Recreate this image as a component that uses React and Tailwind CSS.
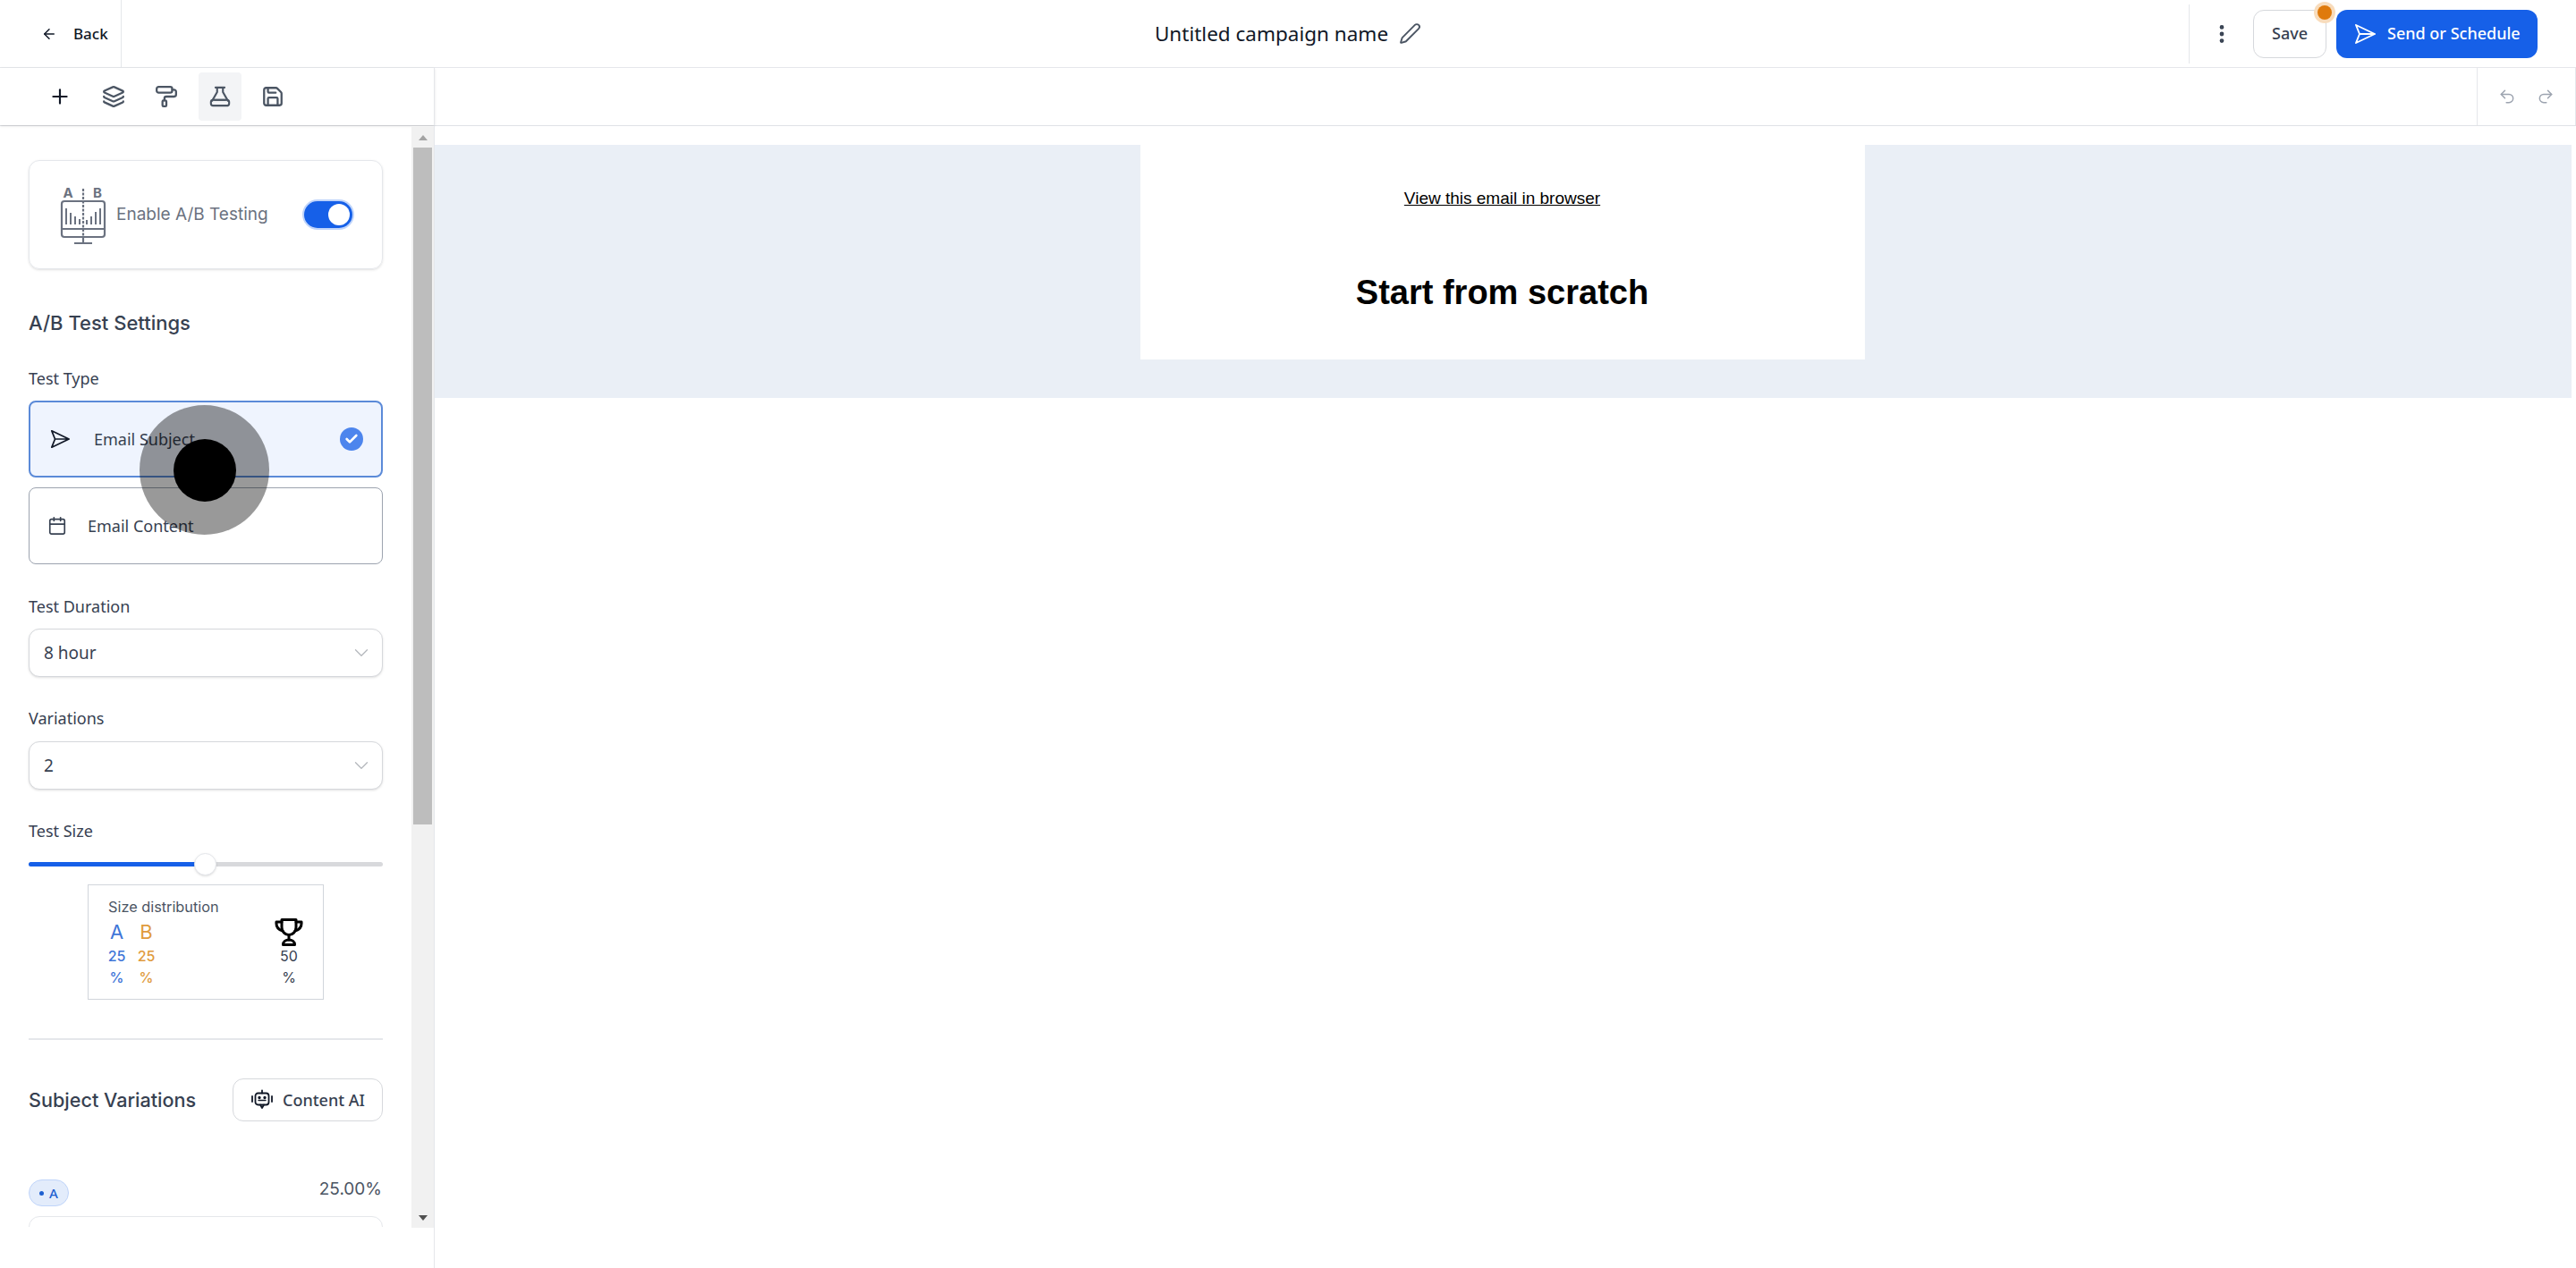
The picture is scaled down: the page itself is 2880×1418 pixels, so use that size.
import { ArrowLeft, Plus, Layers, PaintRoller, Save, Pen, EllipsisVertical, Undo2, Redo2, Calendar, ChevronDown, Check } from "lucide-react";

const PlaneIcon = ({ size = 24, color = "currentColor", stroke = 1.9 }) => (
  <svg width={size} height={size} viewBox="0 0 24 24" fill="none" stroke={color} strokeWidth={stroke} strokeLinejoin="round" strokeLinecap="round" className="shrink-0">
    <path d="M2 2 L23 12 L2 22 L6 12 Z M6 12 H23" />
  </svg>
);

const FlaskIcon = () => (
  <svg width="24" height="24" viewBox="0 0 26 26" fill="none" stroke="#4b5563" strokeWidth="2.3" strokeLinejoin="round" strokeLinecap="round">
    <path d="M7.5 2h11M9.5 2v5.5L3.5 18M16.5 2v5.5L22.5 18" />
    <rect x="2" y="17" width="22" height="7" rx="2.5" />
    <path d="M6.5 17h13" />
  </svg>
);

const TrophyIcon = () => (
  <svg width="32" height="32" viewBox="0 0 32 32" fill="none" stroke="#000000" strokeWidth="3" strokeLinejoin="round" strokeLinecap="round" className="-mt-[1px] mb-[1px] shrink-0">
    <path d="M8 2.5H24V11C24 16 20 19.5 16 19.5C12 19.5 8 16 8 11Z" />
    <path d="M8 5H2C1.5 10 4 13.5 9 15M24 5H30C30.5 10 28 13.5 23 15" />
    <path d="M16 19.5V25" />
    <path d="M9.5 30.5C9.5 27 12.5 25 16 25C19.5 25 22.5 27 22.5 30.5Z" />
  </svg>
);

const RobotIcon = () => (
  <svg width="24" height="24" viewBox="0 0 24 24" fill="none" stroke="#111827" strokeWidth="1.8" strokeLinecap="round" strokeLinejoin="round" className="shrink-0">
    <path d="M12 1.5V4.5" />
    <rect x="4.5" y="4.5" width="15" height="13" rx="3" />
    <path d="M1 8V14M23 8V14M10 17.5L12 21L14 17.5" />
    <path d="M8 12.5H16" strokeWidth="1.4" />
    <circle cx="9" cy="9.5" r="0.8" fill="#111827" />
    <circle cx="15" cy="9.5" r="0.8" fill="#111827" />
  </svg>
);

const AbIcon = () => (
  <svg width="52" height="70" viewBox="0 -4 52 70" fill="none" stroke="#6b7280" strokeWidth="2.2" className="shrink-0">
    <rect x="2" y="16" width="48" height="40" rx="3" />
    <path d="M2 47h48M16 63h20M26 56v7" />
    <path d="M26 2v54" strokeDasharray="3 1.5" />
    <path d="M7 42V24M12 42V29M17 42V33M22 42V36M30 42V37M35 42V33M40 42V28M45 42V24" strokeWidth="2" />
    <text x="9" y="12" fontSize="15" fontWeight="700" fill="#6b7280" stroke="none" textAnchor="middle" fontFamily="Inter, sans-serif">A</text>
    <text x="42" y="12" fontSize="15" fontWeight="700" fill="#6b7280" stroke="none" textAnchor="middle" fontFamily="Inter, sans-serif">B</text>
  </svg>
);

const SelectBox = ({ value }) => (
  <div className="flex h-[54px] items-center justify-between rounded-xl border border-[#d6d8dc] bg-white pl-4 pr-[10px] text-[19px] text-[#374151] shadow-sm">
    <span>{value}</span>
    <ChevronDown size={26} strokeWidth={1.2} color="#b5b8bd" />
  </div>
);

const ToolButton = ({ active, children }) => (
  <div className={`flex h-[54px] w-12 items-center justify-center rounded ${active ? "bg-[#f3f4f6]" : ""}`}>
    {children}
  </div>
);

export default function App() {
  return (
    <div className="flex h-[1418px] w-[2880px] flex-col overflow-hidden bg-white font-['Noto_Sans',sans-serif]">
      {/* top bar */}
      <header className="flex h-[76px] shrink-0 items-center border-b border-[#e5e7eb]">
        <div className="flex h-full flex-1 items-center">
          <div className="flex h-full w-[136px] items-center gap-[18px] border-r border-[#e5e7eb] pl-[46px] text-[17px] font-medium text-[#111827]">
            <ArrowLeft size={18} strokeWidth={2} className="shrink-0" />
            <span>Back</span>
          </div>
        </div>
        <div className="flex items-center gap-3 text-[22.5px] text-[#111827]">
          <span>Untitled campaign name</span>
          <Pen size={25} strokeWidth={1.8} color="#4b5563" />
        </div>
        <div className="flex flex-1 justify-end">
          <div className="flex h-[66px] items-center border-l border-[#e5e7eb] pl-[23px] pr-[43px]">
            <EllipsisVertical size={26} strokeWidth={2.4} color="#374151" />
            <div className="relative ml-[22px] flex h-[54px] w-[82px] items-center justify-center rounded-xl border border-[#d6d8dc] text-[18px] font-medium text-[#374151]">
              Save
              <span className="absolute -right-[7px] -top-[6px] h-4 w-4 rounded-full bg-[#df7a0c] shadow-[0_0_0_4px_#f8dcbc]" />
            </div>
            <div className="ml-[11px] flex h-[54px] w-[225px] items-center gap-[13px] rounded-xl bg-[#1660e8] pl-[20px] text-[18px] font-medium text-white">
              <PlaneIcon color="#ffffff" />
              Send or Schedule
            </div>
          </div>
        </div>
      </header>

      {/* tool row */}
      <div className="flex h-[65px] shrink-0 border-b border-[#e0e2e6]">
        <div className="flex w-[486px] items-center gap-[11.6px] border-r border-[#e5e7eb] pl-[43px] shadow-sm">
          <ToolButton><Plus size={26} strokeWidth={2} color="#111827" /></ToolButton>
          <ToolButton><Layers size={26} strokeWidth={2.1} color="#4b5563" /></ToolButton>
          <ToolButton><PaintRoller size={26} strokeWidth={2.1} color="#4b5563" /></ToolButton>
          <ToolButton active><FlaskIcon /></ToolButton>
          <ToolButton><Save size={26} strokeWidth={2.1} color="#4b5563" /></ToolButton>
        </div>
        <div className="flex-1" />
        <div className="flex w-[111px] items-center justify-center gap-[23px] border-x border-[#e5e7eb]">
          <Undo2 size={20} strokeWidth={1.8} color="#9ca3af" />
          <Redo2 size={20} strokeWidth={1.8} color="#9ca3af" />
        </div>
      </div>

      <div className="flex min-h-0 flex-1">
        {/* left panel */}
        <aside className="relative flex h-full w-[486px] shrink-0 items-start border-r border-[#e5e7eb]">
          <div className="h-[1231px] w-[460px] shrink-0 overflow-hidden px-[32px] pt-[38px]">
            <div className="flex h-[122px] items-center justify-between rounded-xl border border-[#e5e7eb] pl-[34px] pr-[33px] shadow-sm">
              <div className="flex items-center gap-[11px]">
                <AbIcon />
                <span className="font-['Inter',sans-serif] text-[19px] text-[#6b7280]">Enable A/B Testing</span>
              </div>
              <div className="flex h-[30px] w-[54px] items-center justify-end rounded-full bg-[#1660e8] pr-[3px] shadow-[0_0_0_2px_#bfd4fa]">
                <span className="h-6 w-6 rounded-full bg-white" />
              </div>
            </div>

            <h2 className="mt-[44px] font-['Inter',sans-serif] text-[22px] font-medium leading-[32px] text-[#374151]">A/B Test Settings</h2>

            <div className="mt-[33px] text-[18px] leading-[26px] text-[#374151]">Test Type</div>
            <div className="mt-[12px] flex h-[86px] items-center rounded-lg border-2 border-[#5b8ad8] bg-[#eff4fe] pl-[22px] pr-[20px] text-[18px] text-[#374151]">
              <PlaneIcon size={22} color="#111827" />
              <span className="ml-[27px] flex-1">Email Subject</span>
              <span className="flex h-[26px] w-[26px] items-center justify-center rounded-full bg-[#4d85ed]">
                <Check size={16} strokeWidth={4} color="white" />
              </span>
            </div>
            <div className="mt-[11px] flex h-[86px] items-center rounded-lg border border-[#9ca3af] pl-[20px] text-[18px] text-[#374151]">
              <Calendar size={22} strokeWidth={1.8} color="#374151" />
              <span className="ml-[23px]">Email Content</span>
            </div>

            <div className="mt-[34px] text-[18px] leading-[26px] text-[#374151]">Test Duration</div>
            <div className="mt-[12px]"><SelectBox value="8 hour" /></div>
            <div className="mt-[33px] text-[18px] leading-[26px] text-[#374151]">Variations</div>
            <div className="mt-[13px]"><SelectBox value="2" /></div>
            <div className="mt-[33px] text-[18px] leading-[26px] text-[#374151]">Test Size</div>

            <div className="relative mt-[22px] h-[5px] rounded-full bg-[#d8d9dc]">
              <div className="h-full w-[197px] rounded-full bg-[#1660e8]" />
              <span className="absolute left-[185px] top-[-10px] h-[25px] w-[25px] rounded-full border border-[#e5e7eb] bg-white shadow" />
            </div>

            <div className="mx-auto mt-[20px] h-[129px] w-[264px] border border-[#d1d5db] pl-[22px] pr-[21px] pt-[14px]">
              <div className="font-['Inter',sans-serif] text-[16.3px] leading-[20px] text-[#4b5563]">Size distribution</div>
              <div className="-ml-[7px] mt-[3px] flex font-['Inter',sans-serif]">
                <div className="flex w-[33px] flex-col items-center text-[#3f76d8]">
                  <span className="text-[22px] leading-[30px]">A</span>
                  <span className="text-[16px] font-medium leading-[24px]">25</span>
                  <span className="text-[16px] font-medium leading-[24px]">%</span>
                </div>
                <div className="flex w-[33px] flex-col items-center text-[#e09b3d]">
                  <span className="text-[22px] leading-[30px]">B</span>
                  <span className="text-[16px] font-medium leading-[24px]">25</span>
                  <span className="text-[16px] font-medium leading-[24px]">%</span>
                </div>
                <div className="ml-auto flex w-[34px] flex-col items-center text-[#374151]">
                  <TrophyIcon />
                  <span className="-mt-[2px] text-[16px] leading-[24px]">50</span>
                  <span className="text-[16px] leading-[24px]">%</span>
                </div>
              </div>
            </div>

            <div className="mt-[43px] border-t-2 border-[#e5e7eb]" />

            <div className="mt-[43px] flex h-[48px] items-center justify-between">
              <span className="font-['Inter',sans-serif] text-[21.6px] font-medium text-[#374151]">Subject Variations</span>
              <div className="flex h-[48px] w-[168px] items-center justify-center gap-[11px] rounded-xl border border-[#d6d8dc] pl-[1px] text-[18px] font-medium text-[#374151]">
                <RobotIcon />
                Content AI
              </div>
            </div>

            <div className="mt-[62px] flex items-start justify-between">
              <span className="mt-[3px] flex h-[30px] w-[45px] items-center justify-center gap-[6px] rounded-full border border-[#bfd4fa] bg-[#e3ecfb] text-[15px] font-medium text-[#1d5fd0]">
                <span className="h-[5px] w-[5px] rounded-full bg-[#1d5fd0]" />A
              </span>
              <span className="pr-[1px] font-['Inter',sans-serif] text-[19px] leading-[27px] text-[#4b5563]">25.00%</span>
            </div>
            <div className="mt-[11px] h-[40px] rounded-xl border border-[#e5e7eb]" />
          </div>

          {/* scrollbar */}
          <div className="mt-[1px] flex h-[1231px] w-[25px] shrink-0 flex-col items-center bg-[#f1f1f1]">
            <div className="flex h-[23px] w-full items-center justify-center">
              <span className="h-0 w-0 border-x-[5px] border-b-[6px] border-x-transparent border-b-[#a3a3a3]" />
            </div>
            <div className="h-[757px] w-[21px] bg-[#bdbdbd]" />
            <div className="flex-1" />
            <div className="flex h-[23px] w-full items-center justify-center">
              <span className="h-0 w-0 border-x-[5px] border-t-[6px] border-x-transparent border-t-[#505050]" />
            </div>
          </div>

          {/* click marker from the recording */}
          <span className="absolute left-[156px] top-[312px] flex h-[145px] w-[145px] items-center justify-center rounded-full bg-black/40">
            <span className="h-[70px] w-[70px] rounded-full bg-black" />
          </span>
        </aside>

        {/* canvas */}
        <main className="min-w-0 flex-1 pt-[21px] pr-[5px]">
          <div className="flex h-[283px] justify-center bg-[#eaeff6]">
            <div className="flex h-[240px] w-[810px] -translate-x-[1px] flex-col items-center bg-white font-['Liberation_Sans',sans-serif] text-black">
              <a className="mt-[46px] text-[19px] underline">View this email in browser</a>
              <h1 className="mt-[68px] text-[38px] font-bold leading-[44px]">Start from scratch</h1>
            </div>
          </div>
        </main>
      </div>
    </div>
  );
}
